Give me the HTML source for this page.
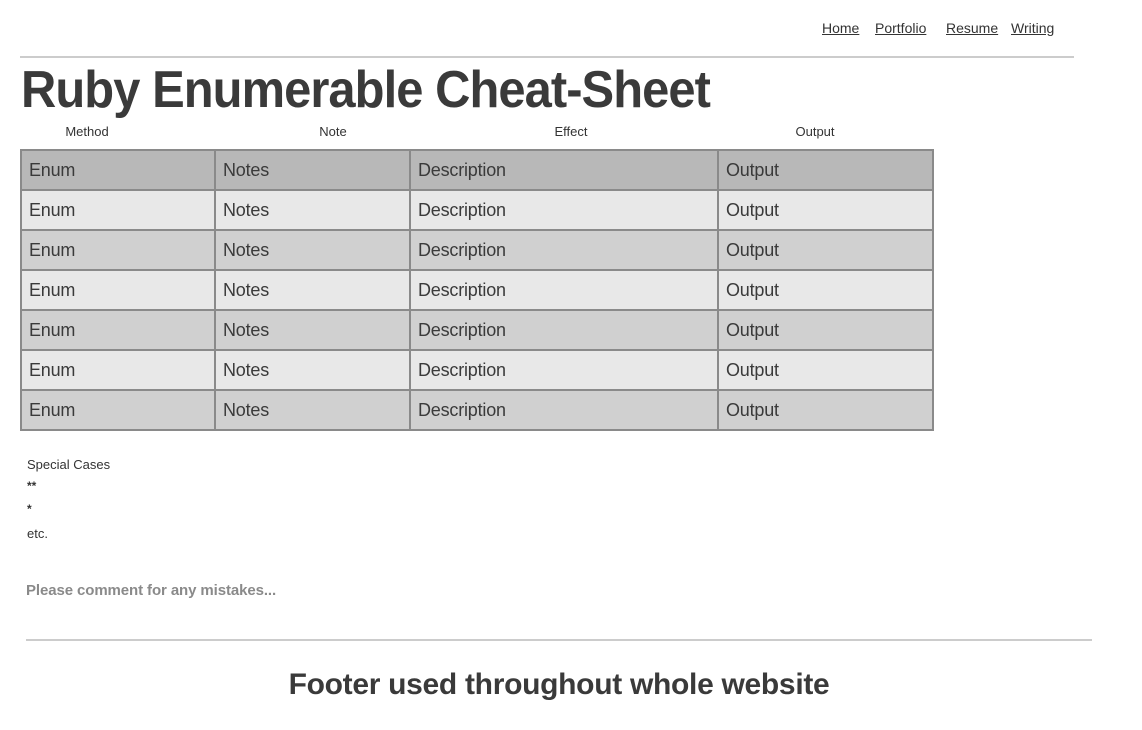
<!DOCTYPE html>
<html><head><meta charset="utf-8"><style>
body{margin:0;width:1142px;height:730px;background:#fff;font-family:"Liberation Sans",sans-serif;color:#333;position:relative;overflow:hidden}
.a{position:absolute;white-space:nowrap}
nav a{color:#333;text-decoration:underline;font-size:14px;position:absolute;top:20px}
.hr{position:absolute;height:2px;background:#ccc}
table{position:absolute;left:20px;top:149px;border-collapse:collapse;width:914px}
td{border:2px solid #8a8a8a;height:38px;padding:0 0 0 7px;font-size:18px;color:#3a3a3a;letter-spacing:-0.2px}
tr:nth-child(odd) td{background:#d0d0d0}
tr:nth-child(even) td{background:#e8e8e8}
tr:first-child td{background:#b8b8b8}
.h{font-size:13px;top:124px;transform:translateX(-50%)}
</style></head><body>
<nav><a style="left:822px">Home</a><a style="left:875px">Portfolio</a><a style="left:946px">Resume</a><a style="left:1011px">Writing</a></nav>
<div class="hr" style="left:20px;top:56px;width:1054px"></div>
<div class="a" style="left:21px;top:60px;font-size:52px;font-weight:bold;color:#3a3a3a;transform:scaleX(0.94);transform-origin:left;letter-spacing:-1px">Ruby Enumerable Cheat-Sheet</div>
<div class="a h" style="left:87px">Method</div>
<div class="a h" style="left:333px">Note</div>
<div class="a h" style="left:571px">Effect</div>
<div class="a h" style="left:815px">Output</div>
<table>
<colgroup><col style="width:194px"><col style="width:195px"><col style="width:308px"><col></colgroup>
<tr><td>Enum</td><td>Notes</td><td>Description</td><td>Output</td></tr>
<tr><td>Enum</td><td>Notes</td><td>Description</td><td>Output</td></tr>
<tr><td>Enum</td><td>Notes</td><td>Description</td><td>Output</td></tr>
<tr><td>Enum</td><td>Notes</td><td>Description</td><td>Output</td></tr>
<tr><td>Enum</td><td>Notes</td><td>Description</td><td>Output</td></tr>
<tr><td>Enum</td><td>Notes</td><td>Description</td><td>Output</td></tr>
<tr><td>Enum</td><td>Notes</td><td>Description</td><td>Output</td></tr>
</table>
<div class="a" style="left:27px;top:457px;font-size:13px">Special Cases</div>
<div class="a" style="left:27px;top:479px;font-size:12px;font-weight:bold">**</div>
<div class="a" style="left:27px;top:502px;font-size:12px;font-weight:bold">*</div>
<div class="a" style="left:27px;top:526px;font-size:13px">etc.</div>
<div class="a" style="left:26px;top:582px;font-size:15px;font-weight:bold;color:#8a8a8a;letter-spacing:-0.1px">Please comment for any mistakes...</div>
<div class="hr" style="left:26px;top:639px;width:1066px"></div>
<div class="a" style="left:559px;top:668px;font-size:30px;font-weight:bold;color:#3a3a3a;transform:translateX(-50%);letter-spacing:-0.3px">Footer used throughout whole website</div>
</body></html>
